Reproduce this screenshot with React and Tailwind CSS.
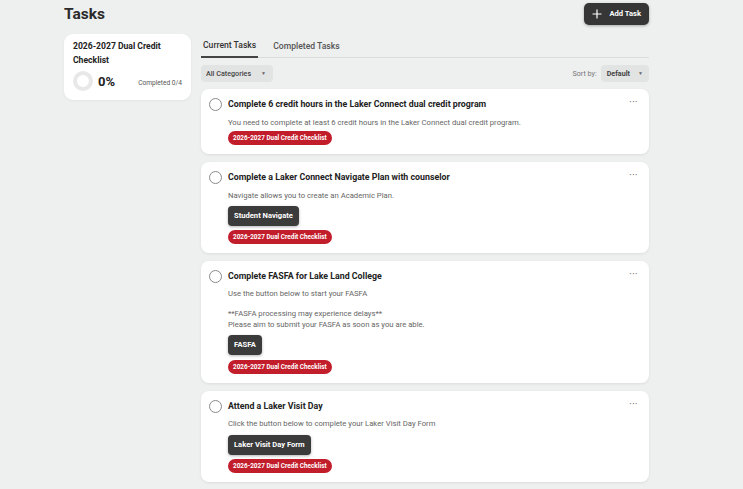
import React from "react";

const Badge = () => (
  <span className="inline-flex items-center h-[14px] px-[5px] rounded-full bg-[#c21d2b] text-white text-[6.4px] font-bold leading-none">
    2026-2027 Dual Credit Checklist
  </span>
);

const DarkBtn = ({ children }) => (
  <span className="inline-flex items-center h-[20px] px-[6px] rounded-[4px] bg-[#3b3b3b] text-white text-[7.6px] font-bold leading-none shadow-[0_1px_3px_rgba(0,0,0,0.3)]">
    {children}
  </span>
);

const Card = ({ title, children }) => (
  <div className="bg-white rounded-[8px] shadow-[0_1px_3px_rgba(0,0,0,0.08)] pl-[8px] pr-[11px] pt-[8px] pb-[9px] flex">
    <div className="w-[13px] h-[13px] rounded-full border-[1.3px] border-[#8a8a8a] mt-[1px] shrink-0" />
    <div className="flex-1 ml-[6px] flex flex-col items-start">
      <div className="flex items-start justify-between self-stretch">
        <div className="text-[8.8px] font-bold text-[#222] leading-[14px]">{title}</div>
        <div className="text-[#777] text-[8px] leading-[10px] tracking-[0.5px] font-bold">···</div>
      </div>
      {children}
    </div>
  </div>
);

const Desc = ({ children, className = "" }) => (
  <div className={"text-[7.7px] text-[#666] leading-[11px] " + className}>{children}</div>
);

export default function App() {
  return (
    <div className="min-h-[489px] bg-[#eeefef] font-['Roboto',sans-serif] pl-[64px] pr-[94px] text-[#222]">
      <div className="flex items-center justify-between h-[28px]">
        <h1 className="text-[15.5px] font-bold text-[#2a2a2a] leading-none mt-[1px]">Tasks</h1>
        <button className="flex items-center gap-[7px] h-[22px] pl-[8px] pr-[8px] rounded-[5px] bg-[#363636] text-white text-[7.6px] font-bold leading-none shadow-[0_1px_3px_rgba(0,0,0,0.3)]">
          <svg width="10" height="10" viewBox="0 0 10 10" fill="none" stroke="white" strokeWidth="1.2">
            <path d="M5 0.5v9M0.5 5h9" />
          </svg>
          Add Task
        </button>
      </div>
      <div className="flex gap-[10px] mt-[6px]">
        <div className="w-[127px] shrink-0 self-start bg-white rounded-[9px] px-[9px] pt-[5px] pb-[9px] shadow-[0_1px_3px_rgba(0,0,0,0.05)]">
          <div className="text-[8.6px] font-bold leading-[14px] text-[#222]">2026-2027 Dual Credit Checklist</div>
          <div className="flex items-center mt-[4px]">
            <div className="w-[20px] h-[20px] rounded-full border-[4px] border-[#e8e8e8]" />
            <div className="ml-[5px] text-[13px] font-bold text-[#222] leading-none">0%</div>
            <div className="ml-auto text-[6.6px] text-[#555] mt-[4px] leading-none">Completed 0/4</div>
          </div>
        </div>
        <div className="flex-1">
          <div className="flex border-b border-[#dcdcdc] h-[24px] items-stretch">
            <div className="flex items-center pt-[1px] px-[2px] border-b-2 border-[#444] text-[8.6px] font-medium text-[#333] -mb-px leading-none">Current Tasks</div>
            <div className="flex items-center pt-[1px] ml-[15px] text-[8.6px] font-medium text-[#555] leading-none">Completed Tasks</div>
          </div>
          <div className="flex items-center justify-between mt-[7px]">
            <div className="flex items-center h-[17px] px-[5px] rounded-[4px] bg-[#e2e3e3] text-[7.2px] font-medium text-[#444] leading-none">
              All Categories
              <span className="ml-[10px] mr-[2px] text-[5px] text-[#666]">▼</span>
            </div>
            <div className="flex items-center">
              <span className="text-[7.2px] text-[#777] mr-[4px] leading-none">Sort by:</span>
              <div className="flex items-center h-[17px] pl-[6px] pr-[6px] rounded-[4px] bg-[#e2e3e3] text-[7.2px] font-bold text-[#444] leading-none">
                Default
                <span className="ml-[8px] text-[5px] text-[#666]">▼</span>
              </div>
            </div>
          </div>
          <div className="flex flex-col gap-[8px] mt-[7px]">
            <Card title="Complete 6 credit hours in the Laker Connect dual credit program">
              <Desc className="mt-[6px]">You need to complete at least 6 credit hours in the Laker Connect dual credit program.</Desc>
              <div className="mt-[3px] flex"><Badge /></div>
            </Card>
            <Card title="Complete a Laker Connect Navigate Plan with counselor">
              <Desc className="mt-[6px]">Navigate allows you to create an Academic Plan.</Desc>
              <div className="mt-[5px] flex"><DarkBtn>Student Navigate</DarkBtn></div>
              <div className="mt-[4px] flex"><Badge /></div>
            </Card>
            <Card title="Complete FASFA for Lake Land College">
              <Desc className="mt-[5px]">Use the button below to start your FASFA</Desc>
              <Desc className="mt-[9px]">**FASFA processing may experience delays**</Desc>
              <Desc>Please aim to submit your FASFA as soon as you are able.</Desc>
              <div className="mt-[5px] flex"><DarkBtn>FASFA</DarkBtn></div>
              <div className="mt-[5px] flex"><Badge /></div>
            </Card>
            <Card title="Attend a Laker Visit Day">
              <Desc className="mt-[5px]">Click the button below to complete your Laker Visit Day Form</Desc>
              <div className="mt-[6px] flex"><DarkBtn>Laker Visit Day Form</DarkBtn></div>
              <div className="mt-[4px] flex"><Badge /></div>
            </Card>
          </div>
        </div>
      </div>
    </div>
  );
}
